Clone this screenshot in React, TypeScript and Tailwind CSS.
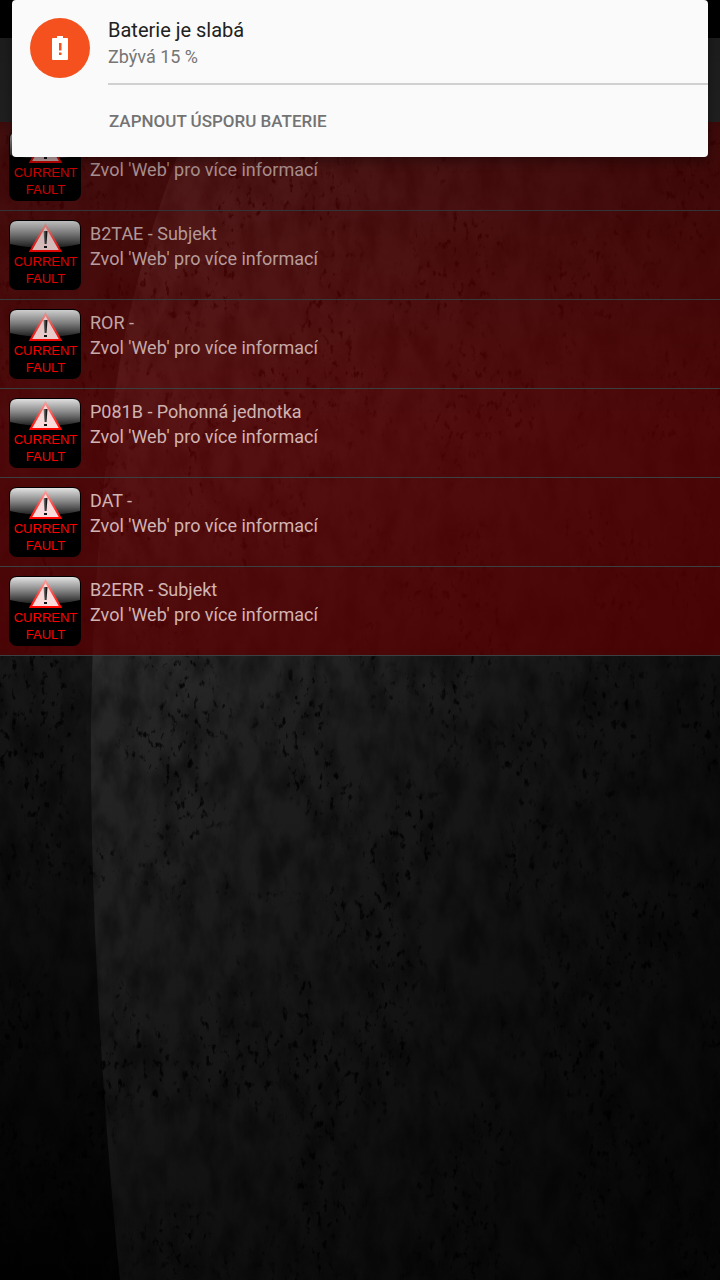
interface Fault {
  id: number;
  title: string;
}

const faults: Fault[] = [
  { id: 1, title: "" },
  { id: 2, title: "B2TAE - Subjekt" },
  { id: 3, title: "ROR -" },
  { id: 4, title: "P081B - Pohonná jednotka" },
  { id: 5, title: "DAT -" },
  { id: 6, title: "B2ERR - Subjekt" },
];

// Dark concrete wall with a large lit disc running off the right edge
function Wallpaper() {
  return (
    <svg
      className="absolute inset-0 h-full w-full"
      viewBox="0 0 720 1280"
      preserveAspectRatio="xMidYMid slice"
      aria-hidden="true"
    >
      <defs>
        <linearGradient id="wall" x1="0" y1="0" x2="0" y2="1">
          <stop offset="0" stopColor="#5a5a5a" />
          <stop offset="0.2" stopColor="#363636" />
          <stop offset="0.52" stopColor="#171717" />
          <stop offset="0.75" stopColor="#0c0c0c" />
          <stop offset="1" stopColor="#020202" />
        </linearGradient>
        <linearGradient id="disc" x1="0" y1="0" x2="0" y2="1">
          <stop offset="0" stopColor="#b0b0b0" />
          <stop offset="0.2" stopColor="#747474" />
          <stop offset="0.35" stopColor="#505050" />
          <stop offset="0.5" stopColor="#2f2f2f" />
          <stop offset="0.56" stopColor="#272727" />
          <stop offset="0.75" stopColor="#1d1d1d" />
          <stop offset="1" stopColor="#101010" />
        </linearGradient>
        <linearGradient id="side" x1="0" y1="0" x2="1" y2="0">
          <stop offset="0.12" stopColor="#000" stopOpacity="0" />
          <stop offset="0.6" stopColor="#000" stopOpacity="0.35" />
          <stop offset="1" stopColor="#000" stopOpacity="0.65" />
        </linearGradient>
        <filter id="pits" x="0" y="0" width="100%" height="100%">
          <feTurbulence type="fractalNoise" baseFrequency="0.17 0.1" numOctaves="3" seed="8" result="fine" />
          <feColorMatrix in="fine" type="matrix" values="0 0 0 0 0  0 0 0 0 0  0 0 0 0 0  6 0 0 0 -3.6" result="spots" />
          <feTurbulence type="fractalNoise" baseFrequency="0.014 0.009" numOctaves="4" seed="3" result="large" />
          <feColorMatrix in="large" type="matrix" values="0 0 0 0 0  0 0 0 0 0  0 0 0 0 0  6 0 0 0 -2.7" result="mask" />
          <feComposite in="spots" in2="mask" operator="in" />
        </filter>
        <filter id="grain" x="0" y="0" width="100%" height="100%">
          <feTurbulence type="fractalNoise" baseFrequency="0.05 0.025" numOctaves="5" seed="21" />
          <feColorMatrix type="matrix" values="0 0 0 0 0  0 0 0 0 0  0 0 0 0 0  2.4 0 0 0 -0.9" />
        </filter>
      </defs>
      <rect width="720" height="1280" fill="url(#wall)" />
      <path
        d="M250 0C200 90 160 190 133 299C112 380 91 560 91 750C91 930 105 1130 120 1280H720V0Z"
        fill="url(#disc)"
      />
      <rect width="720" height="1280" fill="url(#side)" />
      <rect width="720" height="1280" filter="url(#grain)" opacity="0.4" />
      <rect width="720" height="1280" filter="url(#pits)" opacity="0.8" />
    </svg>
  );
}

function FaultIcon() {
  return (
    <svg className="h-[70px] w-[72px] shrink-0" viewBox="0 0 72 70" role="img" aria-label="Current fault">
      <defs>
        <linearGradient id="gloss" x1="0" y1="0" x2="0" y2="1">
          <stop offset="0" stopColor="#e2e2e2" />
          <stop offset="0.5" stopColor="#858585" />
          <stop offset="1" stopColor="#1d1d1d" />
        </linearGradient>
        <linearGradient id="edge" x1="0" y1="0" x2="0" y2="1">
          <stop offset="0" stopColor="#f5a09c" />
          <stop offset="0.5" stopColor="#ff4640" />
          <stop offset="1" stopColor="#ff0500" />
        </linearGradient>
        <linearGradient id="mark" x1="0" y1="0" x2="1" y2="0">
          <stop offset="0" stopColor="#888" />
          <stop offset="0.8" stopColor="#111" />
        </linearGradient>
      </defs>
      <rect width="72" height="70" rx="8" fill="#000" />
      <path d="M1 8Q1 1 8 1H64Q71 1 71 8V24Q36 32 1 24Z" fill="url(#gloss)" />
      <path d="M36.500 5L51.500 31H21.500Z" fill="#fadada" stroke="url(#edge)" strokeWidth="2" />
      <path d="M34.500 11H38.500L37.500 24H35.500Z" fill="url(#mark)" />
      <rect x="35" y="26" width="3" height="2" fill="#111" />
      <text x="36.500" y="46" textAnchor="middle" fontSize="13" fill="#ff0000" className="font-['Liberation_Sans',sans-serif]">
        CURRENT
      </text>
      <text x="36.500" y="63" textAnchor="middle" fontSize="13" fill="#ff0000" className="font-['Liberation_Sans',sans-serif]">
        FAULT
      </text>
    </svg>
  );
}

function FaultRow({ fault }: { fault: Fault }) {
  return (
    <li className="flex h-[89px] gap-[9px] border-b border-[#3b4040] bg-[#5a0000]/75 px-[9px] pt-[9px]">
      <FaultIcon />
      <div className="min-w-0 pt-px text-lg leading-[25px] text-[#d2b4b4]">
        <p className="h-[25px] truncate">{fault.title}</p>
        <p className="truncate">Zvol 'Web' pro více informací</p>
      </div>
    </li>
  );
}

function BatteryNotification() {
  return (
    <section
      role="alert"
      className="absolute inset-x-3 top-0 flex rounded-[4px] bg-[#fafafa] shadow-[0_3px_12px_rgba(0,0,0,0.4)]"
    >
      <div className="w-24 shrink-0 pt-[18px] pl-[18px]">
        <div className="flex h-[60px] w-[60px] items-center justify-center rounded-full bg-[#f4511e]">
          <svg className="h-6 w-4" viewBox="0 0 16 24" aria-hidden="true">
            <path
              fillRule="evenodd"
              fill="#fff"
              d="M5 0H11V2H15Q16 2 16 3V23Q16 24 15 24H1Q0 24 0 23V3Q0 2 1 2H5ZM7 7V14.500H9.500V7ZM7 16.500V19H9.500V16.500Z"
            />
          </svg>
        </div>
      </div>
      <div className="min-w-0 flex-1">
        <div className="border-b-2 border-[#d0d0d0] pt-4 pb-[13px]">
          <h1 className="text-xl leading-7 text-[#212121]">Baterie je slabá</h1>
          <p className="text-lg leading-[26px] text-[#757575]">Zbývá 15 %</p>
        </div>
        <button type="button" className="block h-[72px] w-full pt-0.5 pl-px text-left text-[17px] font-medium text-[#737373]">
          ZAPNOUT ÚSPORU BATERIE
        </button>
      </div>
    </section>
  );
}

export default function App() {
  return (
    <div className="relative min-h-screen overflow-hidden bg-black font-[Roboto,sans-serif]">
      <Wallpaper />
      <main className="relative">
        <div className="h-[38px] bg-black" />
        <header className="h-[84px] bg-[#2a2a2a]" />
        <ul>
          {faults.map((fault) => (
            <FaultRow key={fault.id} fault={fault} />
          ))}
        </ul>
      </main>
      {/* Scrim behind the heads-up notification */}
      <div className="pointer-events-none absolute inset-x-0 top-0 h-[420px] bg-linear-to-b from-black/35 to-transparent" />
      <BatteryNotification />
    </div>
  );
}
